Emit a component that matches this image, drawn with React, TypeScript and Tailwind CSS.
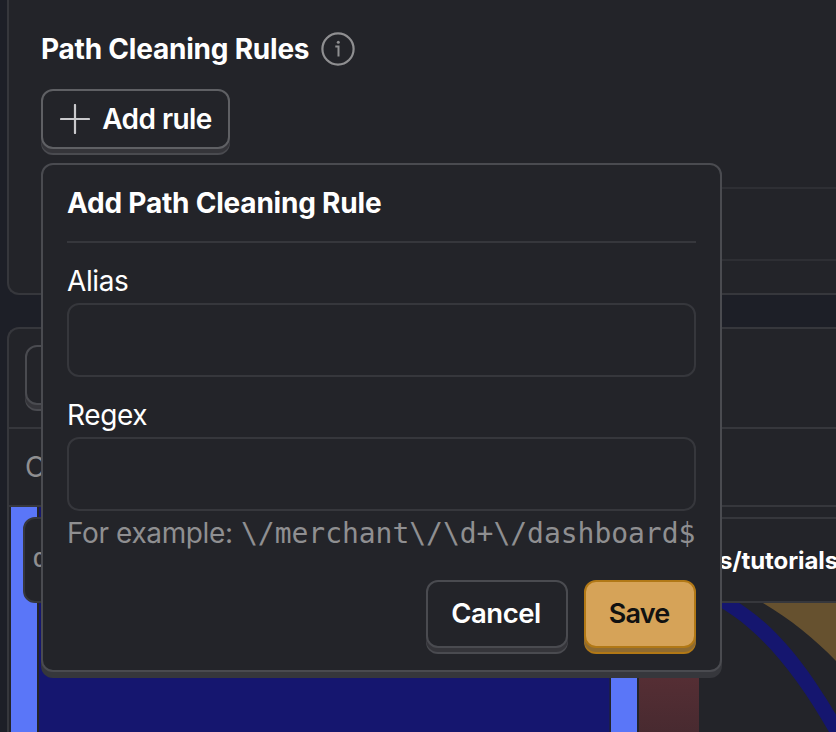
import type { ReactNode } from 'react';

function Button({ children, className = '' }: { children: ReactNode; className?: string }) {
  return (
    <button
      type="button"
      className={`flex items-center justify-center rounded-[12px] border-2 font-semibold ${className}`}
    >
      {children}
    </button>
  );
}

function Field({ label, id }: { label: string; id: string }) {
  return (
    <div className="flex flex-col">
      <label htmlFor={id} className="h-[44px] text-[28px] leading-[44px] tracking-[-0.38px] text-white">
        {label}
      </label>
      <input id={id} className="h-[74px] w-full rounded-[12px] border-2 border-[#36373c] bg-transparent px-4 text-[28px] text-white outline-none" />
    </div>
  );
}

function AddRulePopover() {
  return (
    <div className="absolute left-[41px] top-[163px] flex h-[509px] w-[681px] flex-col rounded-[12px] border-2 border-[#4a4b50] bg-[#232429] px-6 shadow-[0_6px_0_0_#36373c]">
      <h3 className="h-[78px] shrink-0 border-b-2 border-[#36373c] pt-[3px] text-[28px] font-bold leading-[70px] tracking-[-0.21px] text-white">
        Add Path Cleaning Rule
      </h3>
      <div className="mt-4 flex flex-col gap-4">
        <Field label="Alias" id="alias" />
        <Field label="Regex" id="regex" />
      </div>
      <p className="flex h-[44px] items-baseline whitespace-nowrap text-[28px] leading-[44px] text-[#8f8f91]">
        <span className="w-[174px] tracking-[-0.38px]">For example:</span>
        <code className="font-['DejaVu_Sans_Mono',monospace] text-[28px] tracking-[-0.03px]">{'\\/merchant\\/\\d+\\/dashboard$'}</code>
      </p>
      <div className="mt-[25px] flex justify-end gap-4">
        <Button className="h-[68px] w-[142px] border-[#4a4b50] bg-[#232429] pr-[2px] text-[27.5px] tracking-[-0.45px] text-white shadow-[0_4px_0_0_#35353a,0_6px_0_0_#4a4b50]">Cancel</Button>
        <Button className="h-[68px] w-[112px] border-[#b17816] bg-[#d6a358] pr-[2px] text-[27px] tracking-[-0.8px] text-[#111111] shadow-[0_4px_0_0_#8f6b31,0_6px_0_0_#b17816]">
          Save
        </Button>
      </div>
    </div>
  );
}

function PathsChart() {
  return (
    <div className="relative h-[225px] overflow-hidden">
      <svg className="absolute left-0 top-0" width="827" height="225" viewBox="9 507 827 225">
        <defs>
          <linearGradient id="dropoff" x1="0" y1="678" x2="0" y2="732" gradientUnits="userSpaceOnUse">
            <stop offset="0" stopColor="#552e34" />
            <stop offset="1" stopColor="#482a30" />
          </linearGradient>
        </defs>
        <rect x="11" y="507" width="26" height="225" fill="#5a76f8" />
        <rect x="39" y="507" width="570.5" height="225" fill="#15166f" />
        <rect x="611" y="640" width="26" height="92" fill="#5a76f8" />
        <rect x="639" y="640" width="60" height="92" fill="url(#dropoff)" />
        <path d="M700 597 C752 619 793 669 829 732 H846 C807 663 775 624 730 597Z" fill="#15166f" />
        <path d="M763 603 C790 619 815 639 836 661 V603Z" fill="#66512f" />
      </svg>
      <div className="absolute left-[14px] top-[10px] flex h-[86px] w-[300px] items-center rounded-[12px] border-2 border-[#36373c] bg-[#232429] pl-2 text-[20px] font-semibold text-[#8f8f91]">
        01
      </div>
      <div className="absolute left-[620px] top-[10px] flex h-[86px] w-[300px] items-center rounded-[12px] border-2 border-[#36373c] bg-[#232429] pt-px text-[24px] font-bold text-white">
        <span className="pl-[88px] tracking-[-0.1px]">s/tutorials</span>
      </div>
    </div>
  );
}

export default function App() {
  return (
    <div className="relative flex h-[732px] w-[836px] flex-col gap-8 overflow-hidden bg-[#1d1f27] pl-[7px] font-[Inter,sans-serif]">
      <section className="flex h-[295px] w-[860px] shrink-0 flex-col rounded-bl-[12px] border-b-2 border-l-2 border-[#36373c] bg-[#232429] pl-8">
        <div className="mt-[32px] flex h-[34px] items-center gap-3">
          <h2 className="w-[268px] whitespace-nowrap text-[28px] font-bold tracking-[-0.22px] text-white">Path Cleaning Rules</h2>
          <svg width="34" height="34" viewBox="0 0 34 34" fill="none" stroke="#8f8f91" strokeWidth="2.2">
            <circle cx="17" cy="17" r="15.6" />
            <path d="M14.3 14.5h3.2v10" strokeWidth="2" />
            <circle cx="17.3" cy="10.3" r="1.5" fill="#8f8f91" stroke="none" />
          </svg>
        </div>
        <Button className="mt-[23px] h-[60px] w-[189px] shrink-0 gap-[12px] border-[#5f6064] bg-[#232429] pl-px text-[28px] tracking-[-0.55px] text-white shadow-[0_4px_0_0_#35353a,0_6px_0_0_#4a4b50]">
          <svg width="30" height="30" viewBox="0 0 30 30" stroke="#c9c9cc" strokeWidth="2.2" strokeLinecap="round">
            <path d="M1 15h28M15 1v28" />
          </svg>
          <span>Add rule</span>
        </Button>
        <div className="mt-[38px] h-[74px] shrink-0 border-y-2 border-[#2e2f34]" />
      </section>
      <section className="h-[420px] w-[860px] shrink-0 rounded-tl-[12px] border-l-2 border-t-2 border-[#36373c] bg-[#232429]">
        <div className="h-[100px] border-b-2 border-[#36373c] px-4 pt-4">
          <div className="h-[60px] w-[200px] rounded-[12px] border-2 border-[#4a4b50] bg-[#232429] shadow-[0_4px_0_0_#35353a,0_6px_0_0_#4a4b50]" />
        </div>
        <div className="flex h-[78px] items-center border-b-2 border-[#36373c] px-4 text-[28px] text-[#8f8f91]">
          Options
        </div>
        <PathsChart />
      </section>
      <AddRulePopover />
    </div>
  );
}
